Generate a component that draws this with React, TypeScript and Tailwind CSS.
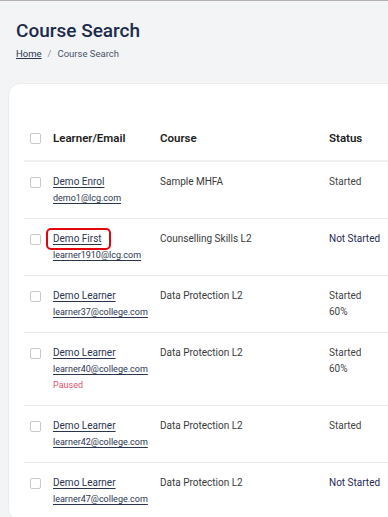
type Row = {
  name: string;
  email: string;
  course: string;
  status: string;
  progress?: string;
  paused?: boolean;
  highlight?: boolean;
};

const rows: Row[] = [
  { name: "Demo Enrol", email: "demo1@lcg.com", course: "Sample MHFA", status: "Started" },
  { name: "Demo First", email: "learner1910@lcg.com", course: "Counselling Skills L2", status: "Not Started", highlight: true },
  { name: "Demo Learner", email: "learner37@college.com", course: "Data Protection L2", status: "Started", progress: "60%" },
  { name: "Demo Learner", email: "learner40@college.com", course: "Data Protection L2", status: "Started", progress: "60%", paused: true },
  { name: "Demo Learner", email: "learner42@college.com", course: "Data Protection L2", status: "Started" },
  { name: "Demo Learner", email: "learner47@college.com", course: "Data Protection L2", status: "Not Started" },
];

function Checkbox() {
  return <span className="block h-[11px] w-[11px] rounded-[2px] border border-[#c9c9c9] bg-white" />;
}

export default function App() {
  return (
    <div
      className="h-[517px] overflow-hidden border-t border-[#b3afb3] bg-[#f3f4f6]"
      style={{ fontFamily: "Roboto, 'Liberation Sans', sans-serif" }}
    >
      {/* Page header */}
      <div className="px-4 pt-[18px]">
        <h1 className="text-[19px] leading-[24px] font-medium text-[#1c2b4a]">Course Search</h1>
        <nav className="mt-[4px] flex items-center gap-[6px] text-[9.5px] leading-[14px] text-[#4a5468]">
          <a href="#" className="text-[#2a3550] underline">Home</a>
          <span className="text-[#8a8f99]">/</span>
          <span>Course Search</span>
        </nav>
      </div>

      {/* Card */}
      <div className="mt-[22px] ml-2 w-[440px] rounded-xl border border-[#ececec] bg-white pl-[15px] pt-[34px]">
        <div className="grid grid-cols-[23px_107px_169px_140px] border-b-2 border-[#f0f0f0] h-[44px] items-center text-[11.5px] font-semibold text-[#222]">
          <div className="pl-[6px] -mt-[1px]"><Checkbox /></div>
          <div className="pl-[6px]">Learner/Email</div>
          <div className="pl-[6px]">Course</div>
          <div className="pl-[6px]">Status</div>
        </div>

        {rows.map((r, i) => (
          <div
            key={i}
            className="grid grid-cols-[23px_107px_169px_140px] border-b border-[#e9e9e9] pt-[12px] pb-[12px] text-[10px] leading-[16px]"
          >
            <div className="pl-[6px] pt-[2.5px]"><Checkbox /></div>
            <div className="pl-[6px]">
              <div className="relative w-max">
                <a href="#" className="text-[#2a3550] underline underline-offset-[2px]">{r.name}</a>
                {r.highlight && (
                  <span className="absolute left-[-7px] right-[-9px] top-[-3px] bottom-[-3px] rounded-[5px] border-[2.5px] border-[#e3050c]" />
                )}
              </div>
              <div className="text-[9px]">
                <a href="#" className="text-[#2a3550] underline underline-offset-[2px]">{r.email}</a>
              </div>
              {r.paused && <div className="text-[9px] text-[#e3506a]">Paused</div>}
            </div>
            <div className="pl-[6px] text-[#3a3a3a]">{r.course}</div>
            <div className="pl-[6px]">
              <div className={r.status === "Not Started" ? "text-[#1f2a55]" : "text-[#444]"}>{r.status}</div>
              {r.progress && <div className="text-[#444]">{r.progress}</div>}
            </div>
          </div>
        ))}
      </div>
    </div>
  );
}
